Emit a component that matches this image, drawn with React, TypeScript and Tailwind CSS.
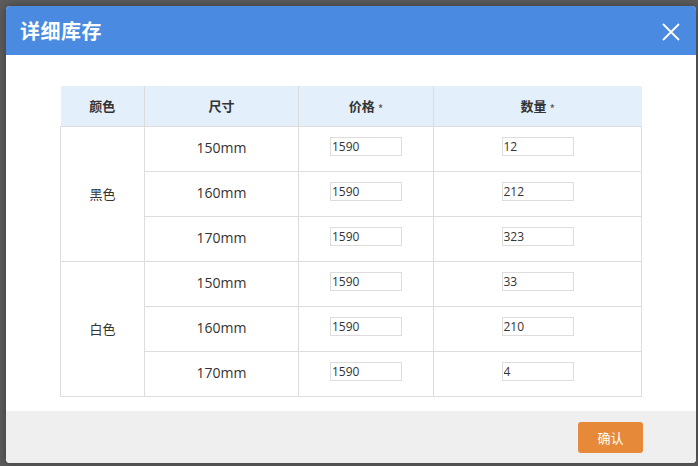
import React from 'react';

const rows = [
  { color: '黑色', items: [
    { size: '150mm', price: '1590', qty: '12' },
    { size: '160mm', price: '1590', qty: '212' },
    { size: '170mm', price: '1590', qty: '323' },
  ] },
  { color: '白色', items: [
    { size: '150mm', price: '1590', qty: '33' },
    { size: '160mm', price: '1590', qty: '210' },
    { size: '170mm', price: '1590', qty: '4' },
  ] },
];

const cell = 'border border-[#dddddd] text-center align-middle';
const inputCls = 'block mx-auto w-[72px] h-[19px] border border-[#dddddd] px-[1px] text-[12px] leading-[17px] text-[#333] outline-none -mt-[4px]';

const App = () => {
  return (
    <div
      className="w-[698px] h-[466px] bg-[#5c5c5c] pl-[6px] pt-[6px] overflow-hidden"
      style={{ fontFamily: '"Open Sans", "Noto Sans CJK SC", sans-serif' }}
    >
      <div className="w-[690px] h-[457px] rounded-[4px] overflow-hidden flex flex-col bg-white shadow-[0_0_10px_rgba(0,0,0,0.35)]">
        <header className="h-[49px] bg-[#4a8ae0] flex items-center justify-between pl-[14px] pr-[16px]">
          <h2 className="text-white text-[20px] font-bold tracking-[0.5px]" style={{ fontFamily: '"Noto Sans CJK SC", sans-serif' }}>
            详细库存
          </h2>
          <svg width="18" height="18" viewBox="0 0 18 18" className="mt-[2px]">
            <path d="M1 1 L17 17 M17 1 L1 17" stroke="white" strokeWidth="1.8" fill="none" />
          </svg>
        </header>

        <div className="h-[356px] pt-[31px] pl-[54px]">
          <table className="border-collapse w-[581px] table-fixed text-[#333333]">
            <colgroup>
              <col className="w-[84px]" />
              <col className="w-[154px]" />
              <col className="w-[135px]" />
              <col className="w-[208px]" />
            </colgroup>
            <thead>
              <tr className="h-[40px] bg-[#e3effb] text-[13px] font-bold" style={{ fontFamily: '"Noto Sans CJK SC", sans-serif' }}>
                <th className="border-r border-[#dcdcdc]">颜色</th>
                <th className="border-r border-[#dcdcdc]">尺寸</th>
                <th className="border-r border-[#dcdcdc]">价格 <span className="relative top-[3px] text-[12px] font-normal text-[#555]">*</span></th>
                <th>数量 <span className="relative top-[3px] text-[12px] font-normal text-[#555]">*</span></th>
              </tr>
            </thead>
            <tbody>
              {rows.map(group =>
                group.items.map((it, i) => (
                  <tr key={group.color + it.size} className="h-[45px]">
                    {i === 0 && (
                      <td rowSpan={3} className={`${cell} text-[13px]`} style={{ fontFamily: '"Noto Sans CJK SC", sans-serif' }}>
                        {group.color}
                      </td>
                    )}
                    <td className={`${cell} text-[14px] pb-[2px]`}>{it.size}</td>
                    <td className={cell}>
                      <input readOnly value={it.price} className={inputCls} />
                    </td>
                    <td className={cell}>
                      <input readOnly value={it.qty} className={inputCls} />
                    </td>
                  </tr>
                ))
              )}
            </tbody>
          </table>
        </div>

        <footer className="h-[52px] bg-[#efefef] flex justify-end items-start pt-[11px] pr-[53px]">
          <button
            className="w-[65px] h-[31px] rounded-[3px] bg-[#e68a3a] text-white text-[13px]"
            style={{ fontFamily: '"Noto Sans CJK SC", sans-serif' }}
          >
            确认
          </button>
        </footer>
      </div>
    </div>
  );
};

export default App;
